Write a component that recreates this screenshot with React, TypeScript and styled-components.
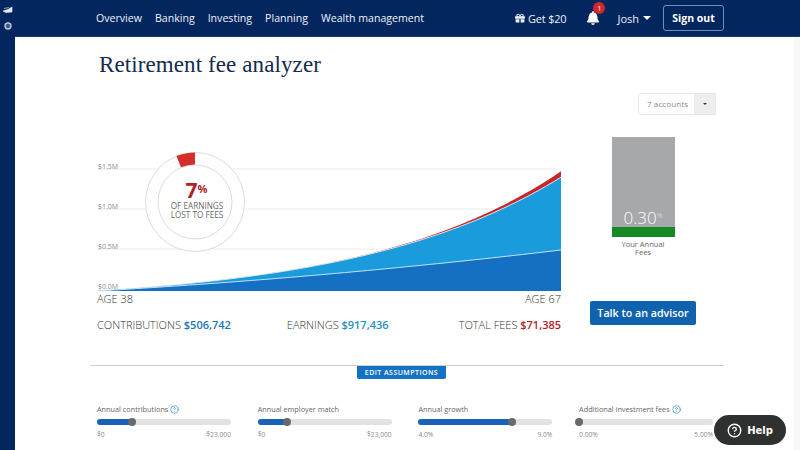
import React from "react";
import styled, { createGlobalStyle } from "styled-components";
import { FaBell, FaGift } from "react-icons/fa";
import { CircleHelp } from "lucide-react";

const Global = createGlobalStyle`
  html, body { margin: 0; padding: 0; width: 800px; height: 450px; overflow: hidden; background: #fff; }
  body { font-family: "Open Sans", "Liberation Sans", sans-serif; }
  * { box-sizing: border-box; }
`;

const Page = styled.div`
  position: relative;
  width: 800px;
  height: 450px;
  display: flex;
  overflow: hidden;
  background: #03265f;
`;

const SideRail = styled.aside`
  width: 15px;
  flex: none;
  display: flex;
  flex-direction: column;
  align-items: center;
  padding-top: 6px;
  gap: 9px;
`;

const Column = styled.div`
  flex: 1;
  min-width: 0;
  display: flex;
  flex-direction: column;
`;

const TopBar = styled.header`
  height: 37px;
  flex: none;
  display: flex;
  align-items: center;
  padding: 0 76px 0 81px;
  border-bottom: 1px solid #1b3c73;
  color: #eef2f8;
  font-size: 10.6px;
  font-weight: 500;
`;

const NavList = styled.nav`
  display: flex;
  gap: 13px;
  flex: 1;
`;

const NavLink = styled.span`
  white-space: nowrap;
`;

const TopRight = styled.div`
  display: flex;
  align-items: center;
`;

const Promo = styled.span`
  display: inline-flex;
  align-items: center;
  gap: 3px;
  white-space: nowrap;
  margin-right: 20px;
  font-size: 11px;
  letter-spacing: -0.2px;
`;

const BellWrap = styled.span`
  position: relative;
  display: inline-flex;
  margin-right: 17px;
`;

const Badge = styled.span`
  position: absolute;
  top: -9px;
  left: 7px;
  width: 12px;
  height: 12px;
  border-radius: 50%;
  background: #d0282c;
  color: #fff;
  font-size: 7px;
  font-weight: 400;
  display: flex;
  align-items: center;
  justify-content: center;
`;

const UserMenu = styled.span`
  display: inline-flex;
  align-items: center;
  gap: 4px;
  margin-right: 12px;
  font-weight: 400;
  font-size: 11px;
`;

const Caret = styled.span<{ $size: number; $color: string }>`
  width: 0;
  height: 0;
  border-left: ${(p) => p.$size}px solid transparent;
  border-right: ${(p) => p.$size}px solid transparent;
  border-top: ${(p) => p.$size}px solid ${(p) => p.$color};
`;

const SignOut = styled.button`
  width: 61px;
  height: 26px;
  margin-top: -1px;
  padding: 0;
  background: transparent;
  color: #fff;
  border: 1px solid #6f8dbd;
  border-radius: 3px;
  font: 700 10.5px "Open Sans", sans-serif;
`;

const Body = styled.div`
  flex: 1;
  min-height: 0;
  display: flex;
  background: #fff;
`;

const Content = styled.main`
  flex: 1;
  min-width: 0;
  padding: 13px 0 0 75px;
`;

const ScrollStrip = styled.div`
  width: 6px;
  flex: none;
  background: #f8f8f8;
`;

const Title = styled.h1`
  margin: 0 0 0 9px;
  height: 29px;
  font: 400 23px/29px "Liberation Serif", "DejaVu Serif", serif;
  letter-spacing: 0.1px;
  color: #152a4e;
  white-space: nowrap;
`;

const SelectRow = styled.div`
  display: flex;
  justify-content: flex-end;
  margin-top: 14px;
  margin-right: 78px;
`;

const Select = styled.div`
  width: 78px;
  height: 22px;
  display: flex;
  border: 1px solid #e9e9e9;
  border-radius: 2px;
  font-size: 8px;
  color: #8a8a8a;
`;

const SelectValue = styled.span`
  flex: 1;
  padding-left: 8px;
  line-height: 20px;
  letter-spacing: 0.1px;
`;

const SelectArrow = styled.span`
  width: 21px;
  background: #eeeeee;
  display: flex;
  align-items: center;
  justify-content: center;
`;

const ChartRow = styled.section`
  display: flex;
  margin-top: 22px;
  padding-left: 7px;
`;

const ChartCol = styled.div`
  width: 464px;
  flex: none;
`;

const ChartSvg = styled.svg`
  display: block;
  width: 464px;
  height: 154px;
`;

const AgeRow = styled.div`
  display: flex;
  justify-content: space-between;
  font-size: 11px;
  font-weight: 300;
  line-height: 16px;
  color: #333;
  height: 16px;
`;

const StatRow = styled.div`
  display: flex;
  margin-top: 10px;
  font-size: 11px;
  line-height: 16px;
  font-weight: 300;
  color: #333;
  white-space: nowrap;
`;

const StatItem = styled.span`
  &:nth-child(2) {
    margin-left: 56px;
  }
  &:nth-child(3) {
    margin-left: auto;
  }
`;

const StatValue = styled.b<{ $color: string }>`
  font-weight: 600;
  color: ${(p) => p.$color};
`;

const RightCol = styled.div`
  width: 136px;
  margin-left: 14px;
  display: flex;
  flex-direction: column;
  align-items: center;
`;

const FeeBar = styled.div`
  width: 63px;
  height: 100px;
  background: #a7a8aa;
  display: flex;
  flex-direction: column;
  justify-content: flex-end;
`;

const FeeValue = styled.div`
  text-align: center;
  color: #fff;
  font-size: 17px;
  font-weight: 300;
  line-height: 19px;
  sup {
    font-size: 7px;
    line-height: 0;
    vertical-align: 6px;
    color: #e4e4e4;
  }
`;

const FeeFill = styled.div`
  height: 10px;
  background: #158a24;
`;

const FeeCaption = styled.div`
  width: 60px;
  margin-top: 3px;
  text-align: center;
  font-size: 7.5px;
  line-height: 8px;
  color: #666;
`;

const AdvisorButton = styled.button`
  margin-top: 45px;
  width: 106px;
  height: 24px;
  padding: 0;
  border: 0;
  border-radius: 2px;
  background: #0f63ae;
  color: #fff;
  font: 600 10.7px "Open Sans", sans-serif;
  white-space: nowrap;
`;

const DividerBlock = styled.div`
  margin: 32px 0 0 0;
  width: 634px;
  border-top: 1px solid #cfcfcf;
  display: flex;
  padding-left: 267px;
`;

const EditTab = styled.div`
  width: 89px;
  height: 13px;
  background: #1471c4;
  color: #fff;
  font-size: 7px;
  font-weight: 600;
  letter-spacing: 0.45px;
  line-height: 13px;
  text-align: center;
  border-radius: 0 0 2px 2px;
  white-space: nowrap;
`;

const SliderGrid = styled.div`
  display: grid;
  grid-template-columns: repeat(4, 134px);
  column-gap: 26.7px;
  margin: 24px 0 0 7px;
`;

const SliderBox = styled.div`
  display: flex;
  flex-direction: column;
`;

const SliderLabel = styled.div`
  display: flex;
  align-items: center;
  gap: 2px;
  height: 12px;
  font-size: 7.3px;
  color: #666;
  white-space: nowrap;
`;

const Track = styled.div`
  position: relative;
  height: 6px;
  margin-top: 4px;
  border-radius: 3px;
  background: #e2e2e2;
`;

const TrackFill = styled.div`
  height: 100%;
  border-radius: 3px;
  background: #1a62b8;
`;

const Thumb = styled.div`
  position: absolute;
  top: -1px;
  width: 8px;
  height: 8px;
  margin-left: -4px;
  border-radius: 50%;
  background: #666a6e;
`;

const RangeRow = styled.div`
  display: flex;
  justify-content: space-between;
  margin-top: 5px;
  font-size: 6.7px;
  line-height: 10px;
  color: #8a8a8a;
`;

const HelpPill = styled.button`
  position: absolute;
  left: 714px;
  top: 415px;
  width: 72px;
  height: 30px;
  border: 0;
  padding: 0;
  border-radius: 15px;
  background: #2f3030;
  color: #fff;
  display: flex;
  align-items: center;
  justify-content: center;
  gap: 5px;
  font: 700 10px "DejaVu Sans", sans-serif;
`;

const curve = (t: number) => 13.4 * (Math.exp(2.25 * t) - 1);
const lower = (t: number) => 27 * t + 14 * t * t;
const feeTop = (t: number) => curve(t) + 6 * Math.pow(t, 5);

const W = 464;
const BASE = 154;

const linePts = (fn: (t: number) => number) => {
  const pts: string[] = [];
  for (let i = 0; i <= 60; i++) {
    const t = i / 60;
    pts.push(`${(t * W).toFixed(1)},${(BASE - fn(t)).toFixed(2)}`);
  }
  return pts;
};

const areaPath = (fn: (t: number) => number) =>
  `M${linePts(fn).join(" L")} L${W},${BASE} L0,${BASE} Z`;
const strokePath = (fn: (t: number) => number) => `M${linePts(fn).join(" L")}`;

const polar = (r: number, deg: number, cx = 98, cy = 65) => {
  const a = (deg * Math.PI) / 180;
  return `${(cx + r * Math.sin(a)).toFixed(2)} ${(cy - r * Math.cos(a)).toFixed(2)}`;
};

const Chart = () => (
  <ChartSvg viewBox="0 0 464 154">
    {[
      { y: 32, label: "$1.5M" },
      { y: 72, label: "$1.0M" },
      { y: 112, label: "$0.5M" },
    ].map((g) => (
      <g key={g.label}>
        <line x1="0" x2="464" y1={g.y} y2={g.y} stroke="#ececec" strokeWidth="1" />
        <text x="1" y={g.y - 0.5} fontSize="7" fill="#8b8b8b" fontFamily="Open Sans, sans-serif">
          {g.label}
        </text>
      </g>
    ))}
    <text x="1" y={BASE - 2} fontSize="7" fill="#8b8b8b" fontFamily="Open Sans, sans-serif">
      $0.0M
    </text>
    <path d={areaPath(feeTop)} fill="#c4282c" />
    <path d={areaPath(curve)} fill="#1a9bdc" />
    <path d={strokePath(curve)} fill="none" stroke="#e9f3fa" strokeWidth="0.9" />
    <path d={areaPath(lower)} fill="#1570c4" />
    <path d={strokePath(lower)} fill="none" stroke="#bfe4f7" strokeWidth="1" />
    <circle cx="98" cy="65" r="49.5" fill="#fff" stroke="#dcdcdc" />
    <circle cx="98" cy="65" r="37" fill="#fff" stroke="#dcdcdc" />
    <path
      d={`M${polar(49.5, -22)} A49.5 49.5 0 0 1 ${polar(49.5, 0)} L${polar(37.5, 0)} A37.5 37.5 0 0 0 ${polar(37.5, -22)} Z`}
      fill="#d42f2b"
    />
    <text x="99.5" y="61" textAnchor="middle" fontSize="21" fontWeight="700" fill="#b02228" fontFamily="Open Sans, sans-serif">
      7<tspan fontSize="11" dy="-5">%</tspan>
    </text>
    <text x="100" y="72" textAnchor="middle" fontSize="8.2" fill="#6a6a6a" fontFamily="Open Sans, sans-serif">
      OF EARNINGS
    </text>
    <text x="100" y="81" textAnchor="middle" fontSize="8.2" fill="#6a6a6a" fontFamily="Open Sans, sans-serif">
      LOST TO FEES
    </text>
  </ChartSvg>
);

const sliders = [
  { label: "Annual contributions", help: true, pct: 26, min: "$0", max: "$23,000" },
  { label: "Annual employer match", help: false, pct: 22, min: "$0", max: "$23,000" },
  { label: "Annual growth", help: false, pct: 70, min: "4.0%", max: "9.0%" },
  { label: "Additional investment fees", help: true, pct: 0, min: "0.00%", max: "5.00%" },
];

export default function App() {
  return (
    <Page>
      <Global />
      <SideRail>
        <svg width="11" height="7" viewBox="0 0 11 7">
          <path d="M1 5 L6 3.5 L10 1 L10 6 L4 6.5 Z M2 2.5 L7 1.5" fill="#e8edf5" stroke="#e8edf5" strokeWidth="0.6" />
        </svg>
        <svg width="8" height="8" viewBox="0 0 8 8">
          <circle cx="4" cy="4" r="3" fill="#3d5a88" stroke="#b9c6d8" strokeWidth="1.4" />
        </svg>
      </SideRail>
      <Column>
        <TopBar>
          <NavList>
            <NavLink>Overview</NavLink>
            <NavLink>Banking</NavLink>
            <NavLink>Investing</NavLink>
            <NavLink>Planning</NavLink>
            <NavLink>Wealth management</NavLink>
          </NavList>
          <TopRight>
            <Promo>
              <FaGift size={10} />
              Get $20
            </Promo>
            <BellWrap>
              <FaBell size={14} color="#fff" />
              <Badge>1</Badge>
            </BellWrap>
            <UserMenu>
              Josh <Caret $size={4.5} $color="#fff" />
            </UserMenu>
            <SignOut>Sign out</SignOut>
          </TopRight>
        </TopBar>
        <Body>
          <Content>
            <Title>Retirement fee analyzer</Title>
            <SelectRow>
              <Select>
                <SelectValue>7 accounts</SelectValue>
                <SelectArrow>
                  <Caret $size={2.5} $color="#333" />
                </SelectArrow>
              </Select>
            </SelectRow>
            <ChartRow>
              <ChartCol>
                <Chart />
                <AgeRow>
                  <span>AGE 38</span>
                  <span>AGE 67</span>
                </AgeRow>
                <StatRow>
                  <StatItem>
                    CONTRIBUTIONS <StatValue $color="#1a78b4">$506,742</StatValue>
                  </StatItem>
                  <StatItem>
                    EARNINGS <StatValue $color="#1f8fc4">$917,436</StatValue>
                  </StatItem>
                  <StatItem>
                    TOTAL FEES <StatValue $color="#b02228">$71,385</StatValue>
                  </StatItem>
                </StatRow>
              </ChartCol>
              <RightCol>
                <FeeBar>
                  <FeeValue>
                    0.30<sup>%</sup>
                  </FeeValue>
                  <FeeFill />
                </FeeBar>
                <FeeCaption>Your Annual Fees</FeeCaption>
                <AdvisorButton>Talk to an advisor</AdvisorButton>
              </RightCol>
            </ChartRow>
            <DividerBlock>
              <EditTab>EDIT ASSUMPTIONS</EditTab>
            </DividerBlock>
            <SliderGrid>
              {sliders.map((s) => (
                <SliderBox key={s.label}>
                  <SliderLabel>
                    {s.label}
                    {s.help && <CircleHelp size={9} color="#2b8ccf" strokeWidth={1.8} />}
                  </SliderLabel>
                  <Track>
                    <TrackFill style={{ width: `${s.pct}%` }} />
                    <Thumb style={{ left: `${s.pct}%` }} />
                  </Track>
                  <RangeRow>
                    <span>{s.min}</span>
                    <span>{s.max}</span>
                  </RangeRow>
                </SliderBox>
              ))}
            </SliderGrid>
          </Content>
          <ScrollStrip />
        </Body>
      </Column>
      <HelpPill>
        <CircleHelp size={15} strokeWidth={2.2} />
        Help
      </HelpPill>
    </Page>
  );
}
